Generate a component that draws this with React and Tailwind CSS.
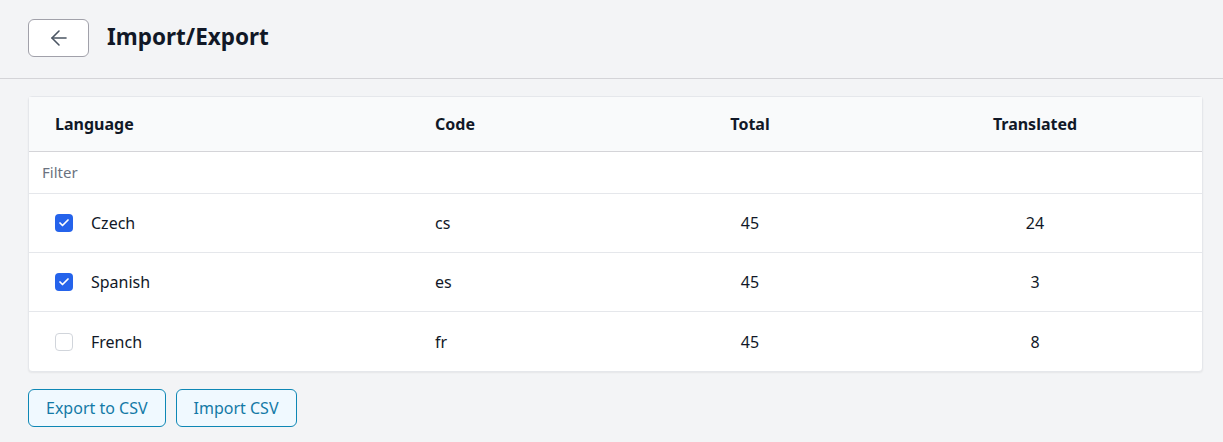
import { useState } from 'react';
import { ArrowLeft, Check } from 'lucide-react';

const languages = [
  { name: 'Czech', code: 'cs', total: 45, translated: 24, checked: true },
  { name: 'Spanish', code: 'es', total: 45, translated: 3, checked: true },
  { name: 'French', code: 'fr', total: 45, translated: 8, checked: false },
];

const cols = 'grid grid-cols-[379px_224px_236px_1fr] items-center';

const App = () => {
  const [rows, setRows] = useState(languages);

  const toggle = (code) => {
    setRows(rows.map((r) => (r.code === code ? { ...r, checked: !r.checked } : r)));
  };

  return (
    <div
      className="min-h-[442px] bg-[#f3f4f6] text-[#111827]"
      style={{ fontFamily: '"Noto Sans", "Open Sans", sans-serif' }}
    >
      <div className="h-[79px] flex items-center gap-[18px] pl-7 pb-[3px] border-b border-[#d4d4d8]">
        <button className="w-[61px] h-[38px] flex items-center justify-center bg-white border border-[#a1a1aa] rounded-md text-[#4b5563]">
          <ArrowLeft size={24} strokeWidth={1.6} />
        </button>
        <h1 className="text-[22.5px] font-bold text-[#111827] leading-none">Import/Export</h1>
      </div>

      <div className="pl-7 pr-5 pt-[17px]">
        <div className="bg-white border border-[#e5e7eb] rounded-sm shadow-[0_1px_2px_rgba(0,0,0,0.06)]">
          <div className={`${cols} h-[55px] bg-[#f9fafb] border-b border-[#d4d4d8] text-[16px] font-bold`}>
            <div className="pl-[26px]">Language</div>
            <div className="pl-[27px]">Code</div>
            <div className="text-center">Total</div>
            <div className="text-center">Translated</div>
          </div>
          <div className="h-[42px] flex items-center px-[13px] border-b border-[#e5e7eb]">
            <input
              placeholder="Filter"
              className="w-full outline-none text-[15px] placeholder:text-[#6b7280] bg-transparent"
            />
          </div>
          {rows.map((r, i) => (
            <div
              key={r.code}
              className={`${cols} h-[59px] text-[16px] ${i < rows.length - 1 ? 'border-b border-[#e5e7eb]' : ''}`}
            >
              <div className="pl-[26px] flex items-center gap-[18px]">
                <button
                  onClick={() => toggle(r.code)}
                  className={`w-[18px] h-[18px] rounded-[4px] flex items-center justify-center ${
                    r.checked ? 'bg-[#2563eb]' : 'bg-white border border-[#d1d5db]'
                  }`}
                >
                  {r.checked && <Check size={12} strokeWidth={3.5} className="text-white" />}
                </button>
                <span>{r.name}</span>
              </div>
              <div className="pl-[27px]">{r.code}</div>
              <div className="text-center">{r.total}</div>
              <div className="text-center">{r.translated}</div>
            </div>
          ))}
        </div>

        <div className="flex gap-[10px] mt-[17px]">
          <button className="h-[38px] px-[17px] rounded-md border border-[#0e87b5] bg-[#f0f9ff] text-[#1479a6] text-[16px]">
            Export to CSV
          </button>
          <button className="h-[38px] px-[17px] rounded-md border border-[#0e87b5] bg-[#f0f9ff] text-[#1479a6] text-[16px]">
            Import CSV
          </button>
        </div>
      </div>
    </div>
  );
};

export default App;
